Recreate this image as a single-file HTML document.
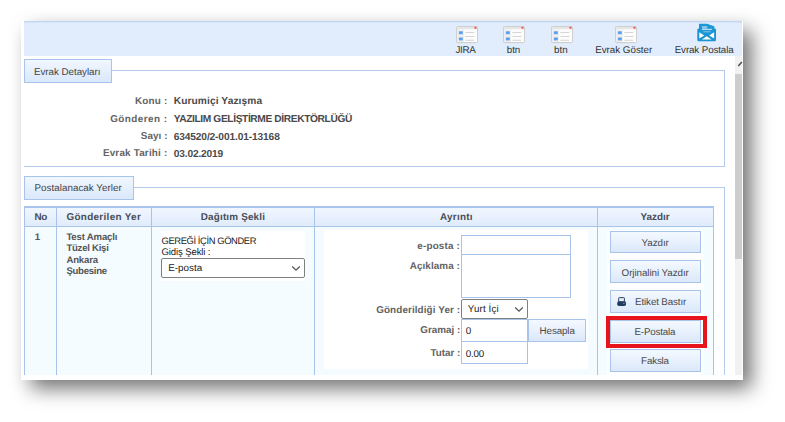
<!DOCTYPE html>
<html lang="tr"><head><meta charset="utf-8"><title>Evrak Postala</title>
<style>
html,body{margin:0;padding:0;background:#fff;}
body{width:785px;height:422px;position:relative;overflow:hidden;text-rendering:geometricPrecision;font-family:"Liberation Sans",sans-serif;}
.btn{position:absolute;box-sizing:border-box;border:1px solid #a9c4ea;background:linear-gradient(#f4f9ff,#dbe8fa);}
.inp{position:absolute;box-sizing:border-box;border:1px solid #a9c4ea;background:#fff;}
.sel{position:absolute;box-sizing:border-box;border:1px solid #808080;border-radius:2px;background:#fff;}
.leg{position:absolute;box-sizing:border-box;border:1px solid #a9c4ea;background:linear-gradient(#f2f7ff,#d9e8fb);}
</style></head><body>

<div style="position:absolute;left:21px;top:21px;width:722px;height:359px;box-sizing:border-box;background:#fff;box-shadow:8.5px 8.5px 19px rgba(0,0,0,0.56);"></div>
<div style="position:absolute;left:24px;top:21px;width:718px;height:35px;box-sizing:border-box;background:linear-gradient(#c3d7f3 0,#c3d7f3 1px,#d4e3f8 1px,#d4e3f8 2px,#e1edfd 2px);"></div>
<svg style="position:absolute;left:455.6px;top:25.5px" width="22" height="18" viewBox="0 0 22 18">
<rect x="0.6" y="1" width="20.8" height="16.2" rx="1" fill="#d9d9d9" opacity="0.7"/>
<rect x="0.5" y="0.5" width="21" height="16" rx="1" fill="#fcfcfc" stroke="#cfcfcf"/>
<rect x="1" y="1" width="20" height="2.2" fill="#e6e6e6"/>
<rect x="1" y="3.2" width="7" height="12.8" fill="#eeeeee"/>
<rect x="18.4" y="0.7" width="2.2" height="2" fill="#e8605c"/>
<rect x="2.9" y="5.3" width="3.9" height="2.9" fill="#5a9ff0"/>
<rect x="2.9" y="11.5" width="3.9" height="2.9" fill="#5a9ff0"/>
<rect x="9.4" y="6.2" width="8.8" height="0.8" fill="#cbcbcb"/>
<rect x="9.4" y="10" width="8.8" height="0.8" fill="#cbcbcb"/>
<rect x="9.4" y="13.8" width="8.8" height="0.8" fill="#cbcbcb"/>
</svg>
<svg style="position:absolute;left:503.2px;top:25.5px" width="22" height="18" viewBox="0 0 22 18">
<rect x="0.6" y="1" width="20.8" height="16.2" rx="1" fill="#d9d9d9" opacity="0.7"/>
<rect x="0.5" y="0.5" width="21" height="16" rx="1" fill="#fcfcfc" stroke="#cfcfcf"/>
<rect x="1" y="1" width="20" height="2.2" fill="#e6e6e6"/>
<rect x="1" y="3.2" width="7" height="12.8" fill="#eeeeee"/>
<rect x="18.4" y="0.7" width="2.2" height="2" fill="#e8605c"/>
<rect x="2.9" y="5.3" width="3.9" height="2.9" fill="#5a9ff0"/>
<rect x="2.9" y="11.5" width="3.9" height="2.9" fill="#5a9ff0"/>
<rect x="9.4" y="6.2" width="8.8" height="0.8" fill="#cbcbcb"/>
<rect x="9.4" y="10" width="8.8" height="0.8" fill="#cbcbcb"/>
<rect x="9.4" y="13.8" width="8.8" height="0.8" fill="#cbcbcb"/>
</svg>
<svg style="position:absolute;left:550.7px;top:25.5px" width="22" height="18" viewBox="0 0 22 18">
<rect x="0.6" y="1" width="20.8" height="16.2" rx="1" fill="#d9d9d9" opacity="0.7"/>
<rect x="0.5" y="0.5" width="21" height="16" rx="1" fill="#fcfcfc" stroke="#cfcfcf"/>
<rect x="1" y="1" width="20" height="2.2" fill="#e6e6e6"/>
<rect x="1" y="3.2" width="7" height="12.8" fill="#eeeeee"/>
<rect x="18.4" y="0.7" width="2.2" height="2" fill="#e8605c"/>
<rect x="2.9" y="5.3" width="3.9" height="2.9" fill="#5a9ff0"/>
<rect x="2.9" y="11.5" width="3.9" height="2.9" fill="#5a9ff0"/>
<rect x="9.4" y="6.2" width="8.8" height="0.8" fill="#cbcbcb"/>
<rect x="9.4" y="10" width="8.8" height="0.8" fill="#cbcbcb"/>
<rect x="9.4" y="13.8" width="8.8" height="0.8" fill="#cbcbcb"/>
</svg>
<svg style="position:absolute;left:614.8px;top:25.5px" width="22" height="18" viewBox="0 0 22 18">
<rect x="0.6" y="1" width="20.8" height="16.2" rx="1" fill="#d9d9d9" opacity="0.7"/>
<rect x="0.5" y="0.5" width="21" height="16" rx="1" fill="#fcfcfc" stroke="#cfcfcf"/>
<rect x="1" y="1" width="20" height="2.2" fill="#e6e6e6"/>
<rect x="1" y="3.2" width="7" height="12.8" fill="#eeeeee"/>
<rect x="18.4" y="0.7" width="2.2" height="2" fill="#e8605c"/>
<rect x="2.9" y="5.3" width="3.9" height="2.9" fill="#5a9ff0"/>
<rect x="2.9" y="11.5" width="3.9" height="2.9" fill="#5a9ff0"/>
<rect x="9.4" y="6.2" width="8.8" height="0.8" fill="#cbcbcb"/>
<rect x="9.4" y="10" width="8.8" height="0.8" fill="#cbcbcb"/>
<rect x="9.4" y="13.8" width="8.8" height="0.8" fill="#cbcbcb"/>
</svg>
<svg style="position:absolute;left:697px;top:23px" width="20" height="19" viewBox="0 0 20 19">
<path d="M2.6 1.3 H9.8 L16.8 3.8 V11 H2.6 Z" fill="#1d98d5" stroke="#1d98d5" stroke-width="1.2" stroke-linejoin="round"/>
<rect x="0.3" y="5.6" width="18.7" height="12.6" rx="1.3" fill="#1a93d2"/>
<path d="M2.6 1.3 H9.8 L16.8 3.8 V11 H2.6 Z" fill="#1d98d5"/>
<path d="M5 3.1 H10.2 V5.6 H5 Z" fill="#8cc9ec"/>
<rect x="5" y="5.8" width="9.8" height="1.1" fill="#c9e6f7"/>
<rect x="6.2" y="8.2" width="7.4" height="1" rx="0.5" fill="#7fc2ea"/>
<path d="M2.3 9.3 L7.2 12.5 L2.3 15.6 Z" fill="#fff"/>
<path d="M17.1 9.3 L12.2 12.5 L17.1 15.6 Z" fill="#fff"/>
<path d="M4.8 16.5 L9.7 13.3 L14.6 16.5 Z" fill="#fff"/>
</svg>
<div style="position:absolute;top:44px;height:14px;line-height:14px;font-size:9.8px;font-weight:normal;color:#333;white-space:nowrap;letter-spacing:-0.284px;left:455.40px;">JIRA</div>
<div style="position:absolute;top:44px;height:14px;line-height:14px;font-size:9.8px;font-weight:normal;color:#333;white-space:nowrap;left:506.69px;">btn</div>
<div style="position:absolute;top:44px;height:14px;line-height:14px;font-size:9.8px;font-weight:normal;color:#333;white-space:nowrap;left:553.99px;">btn</div>
<div style="position:absolute;top:44px;height:14px;line-height:14px;font-size:9.8px;font-weight:normal;color:#333;white-space:nowrap;letter-spacing:-0.015px;left:595.20px;">Evrak Göster</div>
<div style="position:absolute;top:44px;height:14px;line-height:14px;font-size:9.8px;font-weight:normal;color:#333;white-space:nowrap;letter-spacing:-0.120px;left:674.70px;">Evrak Postala</div>
<div style="position:absolute;left:735px;top:56px;width:7px;height:319px;box-sizing:border-box;background:#f1f1f1;"></div>
<div style="position:absolute;left:735px;top:74px;width:7px;height:184.5px;box-sizing:border-box;background:#cdcdcd;"></div>
<svg style="position:absolute;left:736px;top:59px" width="7" height="9" viewBox="0 0 7 9"><path d="M2.3 6.9 L5.9 2.9" stroke="#4d4d4d" stroke-width="1.5" fill="none"/></svg>
<div style="position:absolute;left:24px;top:69.6px;width:701px;height:97.2px;box-sizing:border-box;border:1px solid #b4cbee;border-left:none;"></div>
<div class="leg" style="left:24px;top:58.6px;width:87.8px;height:24.4px;"></div>
<div style="position:absolute;top:66px;height:14px;line-height:14px;font-size:9.8px;font-weight:normal;color:#444;white-space:nowrap;letter-spacing:-0.039px;left:34.00px;">Evrak Detayları</div>
<div style="position:absolute;top:95px;height:14px;line-height:14px;font-size:9.9px;font-weight:bold;color:#636363;white-space:nowrap;letter-spacing:0.210px;left:135.00px;">Konu :</div>
<div style="position:absolute;top:95px;height:14px;line-height:14px;font-size:10.2px;font-weight:bold;color:#4a4a4a;white-space:nowrap;letter-spacing:0.093px;left:173.70px;">Kurumiçi Yazışma</div>
<div style="position:absolute;top:113px;height:14px;line-height:14px;font-size:9.9px;font-weight:bold;color:#636363;white-space:nowrap;letter-spacing:0.460px;left:110.20px;">Gönderen :</div>
<div style="position:absolute;top:113px;height:14px;line-height:14px;font-size:10.2px;font-weight:bold;color:#4a4a4a;white-space:nowrap;letter-spacing:-0.372px;left:173.70px;">YAZILIM GELİŞTİRME DİREKTÖRLÜĞÜ</div>
<div style="position:absolute;top:130px;height:14px;line-height:14px;font-size:9.9px;font-weight:bold;color:#636363;white-space:nowrap;letter-spacing:0.064px;left:140.80px;">Sayı :</div>
<div style="position:absolute;top:131px;height:14px;line-height:14px;font-size:10.2px;font-weight:bold;color:#4a4a4a;white-space:nowrap;letter-spacing:-0.133px;left:173.70px;">634520/2-001.01-13168</div>
<div style="position:absolute;top:147px;height:14px;line-height:14px;font-size:9.9px;font-weight:bold;color:#636363;white-space:nowrap;letter-spacing:0.193px;left:102.90px;">Evrak Tarihi :</div>
<div style="position:absolute;top:148px;height:14px;line-height:14px;font-size:10.2px;font-weight:bold;color:#4a4a4a;white-space:nowrap;letter-spacing:-0.155px;left:173.70px;">03.02.2019</div>
<div style="position:absolute;left:24px;top:186.8px;width:701px;height:188.2px;box-sizing:border-box;border:1px solid #b4cbee;border-left:none;border-bottom:none;"></div>
<div class="leg" style="left:24px;top:175.5px;width:109.6px;height:24px;"></div>
<div style="position:absolute;top:182px;height:14px;line-height:14px;font-size:9.8px;font-weight:normal;color:#444;white-space:nowrap;letter-spacing:0.046px;left:34.40px;">Postalanacak Yerler</div>
<div style="position:absolute;left:24px;top:206.6px;width:689.5px;height:168.4px;box-sizing:border-box;background:#f4fcff;"></div>
<div style="position:absolute;left:24px;top:206.6px;width:689.5px;height:20.4px;box-sizing:border-box;background:linear-gradient(#f1f7ff,#dfebfb);"></div>
<div style="position:absolute;left:24px;top:206.4px;width:690px;height:1.3px;box-sizing:border-box;background:#a9c4ea;"></div>
<div style="position:absolute;left:24px;top:226.2px;width:690px;height:1.1px;box-sizing:border-box;background:#a9c4ea;"></div>
<div style="position:absolute;left:23.5px;top:206.4px;width:1.2px;height:168.6px;box-sizing:border-box;background:#a9c4ea;"></div>
<div style="position:absolute;left:56.3px;top:206.4px;width:1.2px;height:168.6px;box-sizing:border-box;background:#a9c4ea;"></div>
<div style="position:absolute;left:151px;top:206.4px;width:1.2px;height:168.6px;box-sizing:border-box;background:#a9c4ea;"></div>
<div style="position:absolute;left:313.7px;top:206.4px;width:1.2px;height:168.6px;box-sizing:border-box;background:#a9c4ea;"></div>
<div style="position:absolute;left:597.1px;top:206.4px;width:1.2px;height:168.6px;box-sizing:border-box;background:#a9c4ea;"></div>
<div style="position:absolute;left:712.9px;top:206.4px;width:1.2px;height:168.6px;box-sizing:border-box;background:#a9c4ea;"></div>
<div style="position:absolute;top:211px;height:14px;line-height:14px;font-size:9.9px;font-weight:bold;color:#474d58;white-space:nowrap;letter-spacing:-0.498px;left:34.60px;">No</div>
<div style="position:absolute;top:211px;height:14px;line-height:14px;font-size:9.9px;font-weight:bold;color:#474d58;white-space:nowrap;letter-spacing:0.333px;left:66.40px;">Gönderilen Yer</div>
<div style="position:absolute;top:211px;height:14px;line-height:14px;font-size:9.9px;font-weight:bold;color:#474d58;white-space:nowrap;letter-spacing:0.172px;left:200.80px;">Dağıtım Şekli</div>
<div style="position:absolute;top:211px;height:14px;line-height:14px;font-size:9.9px;font-weight:bold;color:#474d58;white-space:nowrap;letter-spacing:0.273px;left:440.00px;">Ayrıntı</div>
<div style="position:absolute;top:211px;height:14px;line-height:14px;font-size:9.9px;font-weight:bold;color:#474d58;white-space:nowrap;letter-spacing:0.039px;left:640.40px;">Yazdır</div>
<div style="position:absolute;top:231px;height:14px;line-height:14px;font-size:9.6px;font-weight:bold;color:#555;white-space:nowrap;left:34.80px;">1</div>
<div style="position:absolute;top:231px;height:14px;line-height:14px;font-size:9.6px;font-weight:bold;color:#555;white-space:nowrap;letter-spacing:-0.184px;left:66.40px;">Test Amaçlı</div>
<div style="position:absolute;top:242px;height:14px;line-height:14px;font-size:9.6px;font-weight:bold;color:#555;white-space:nowrap;letter-spacing:-0.261px;left:66.40px;">Tüzel Kişi</div>
<div style="position:absolute;top:254px;height:14px;line-height:14px;font-size:9.6px;font-weight:bold;color:#555;white-space:nowrap;letter-spacing:-0.175px;left:66.40px;">Ankara</div>
<div style="position:absolute;top:265px;height:14px;line-height:14px;font-size:9.6px;font-weight:bold;color:#555;white-space:nowrap;letter-spacing:-0.272px;left:66.40px;">Şubesine</div>
<div style="position:absolute;left:160.8px;top:231px;width:144.2px;height:50.4px;box-sizing:border-box;background:#fff;"></div>
<div style="position:absolute;top:234px;height:14px;line-height:14px;font-size:9.4px;font-weight:normal;color:#222;white-space:nowrap;letter-spacing:-0.391px;left:161.50px;">GEREĞİ İÇİN GÖNDER</div>
<div style="position:absolute;top:246px;height:14px;line-height:14px;font-size:9.6px;font-weight:normal;color:#222;white-space:nowrap;letter-spacing:-0.137px;left:161.50px;">Gidiş Şekli :</div>
<div class="sel" style="left:161px;top:257.6px;width:143.8px;height:20.4px;"></div>
<div style="position:absolute;top:262px;height:14px;line-height:14px;font-size:9.8px;font-weight:normal;color:#222;white-space:nowrap;letter-spacing:0.047px;left:168.20px;">E-posta</div>
<svg style="position:absolute;left:291.4px;top:264.5px" width="10" height="7" viewBox="0 0 10 7"><path d="M1.2 1.5 L5 5.2 L8.8 1.5" stroke="#555" stroke-width="1.25" fill="none"/></svg>
<div style="position:absolute;left:323.5px;top:230px;width:264.9px;height:139.2px;box-sizing:border-box;background:#fff;"></div>
<div style="position:absolute;top:240px;height:14px;line-height:14px;font-size:9.9px;font-weight:bold;color:#636363;white-space:nowrap;letter-spacing:0.172px;left:417.30px;">e-posta :</div>
<div style="position:absolute;top:260px;height:14px;line-height:14px;font-size:9.9px;font-weight:bold;color:#636363;white-space:nowrap;letter-spacing:0.088px;left:409.70px;">Açıklama :</div>
<div style="position:absolute;top:304px;height:14px;line-height:14px;font-size:9.9px;font-weight:bold;color:#636363;white-space:nowrap;letter-spacing:0.104px;left:376.20px;">Gönderildiği Yer :</div>
<div style="position:absolute;top:324px;height:14px;line-height:14px;font-size:9.9px;font-weight:bold;color:#636363;white-space:nowrap;letter-spacing:-0.021px;left:420.30px;">Gramaj :</div>
<div style="position:absolute;top:347px;height:14px;line-height:14px;font-size:9.9px;font-weight:bold;color:#636363;white-space:nowrap;letter-spacing:-0.038px;left:430.50px;">Tutar :</div>
<div class="inp" style="left:461px;top:234.9px;width:109.6px;height:20px;"></div>
<div class="inp" style="left:461px;top:254px;width:109.6px;height:43.8px;"></div>
<div class="sel" style="left:461px;top:298.8px;width:66.6px;height:20px;"></div>
<div style="position:absolute;top:303px;height:14px;line-height:14px;font-size:9.8px;font-weight:normal;color:#222;white-space:nowrap;letter-spacing:0.131px;left:467.80px;">Yurt İçi</div>
<svg style="position:absolute;left:514.4px;top:306px" width="10" height="7" viewBox="0 0 10 7"><path d="M1.2 1.5 L5 5.2 L8.8 1.5" stroke="#555" stroke-width="1.25" fill="none"/></svg>
<div class="inp" style="left:461px;top:318.8px;width:66.6px;height:23px;"></div>
<div class="inp" style="left:461px;top:341px;width:66.6px;height:23.4px;"></div>
<div style="position:absolute;top:325px;height:14px;line-height:14px;font-size:9.8px;font-weight:normal;color:#222;white-space:nowrap;left:465.80px;">0</div>
<div style="position:absolute;top:348px;height:14px;line-height:14px;font-size:9.8px;font-weight:normal;color:#222;white-space:nowrap;letter-spacing:-0.193px;left:465.80px;">0.00</div>
<div class="btn" style="left:528.4px;top:319.4px;width:57.8px;height:22.2px;"><span style="position:absolute;top:4.6px;height:14px;line-height:14px;font-size:9.8px;font-weight:normal;color:#4a4a4a;white-space:nowrap;letter-spacing:-0.108px;left:10.20px;">Hesapla</span></div>
<div style="position:absolute;left:606.6px;top:229.5px;width:97.2px;height:145.5px;box-sizing:border-box;background:#fdfeff;"></div>
<div class="btn" style="left:609.9px;top:231.3px;width:91.4px;height:22.1px;"><span style="position:absolute;top:4.7px;height:14px;line-height:14px;font-size:9.8px;font-weight:normal;color:#4a4a4a;white-space:nowrap;letter-spacing:-0.049px;left:30.60px;">Yazdır</span></div>
<div class="btn" style="left:609.9px;top:260.3px;width:91.4px;height:23.2px;"><span style="position:absolute;top:5.7px;height:14px;line-height:14px;font-size:9.8px;font-weight:normal;color:#4a4a4a;white-space:nowrap;letter-spacing:-0.063px;left:10.70px;">Orjinalini Yazdır</span></div>
<div class="btn" style="left:609.9px;top:290px;width:91.4px;height:23.2px;"><span style="position:absolute;top:5px;height:14px;line-height:14px;font-size:9.8px;font-weight:normal;color:#4a4a4a;white-space:nowrap;letter-spacing:-0.133px;left:24.20px;">Etiket Bastır</span></div>
<div class="btn" style="left:609.9px;top:320.3px;width:91.4px;height:22.4px;"><span style="position:absolute;top:4.7px;height:14px;line-height:14px;font-size:9.8px;font-weight:normal;color:#4a4a4a;white-space:nowrap;letter-spacing:-0.188px;left:23.60px;">E-Postala</span></div>
<div class="btn" style="left:609.9px;top:349.3px;width:91.4px;height:22.5px;"><span style="position:absolute;top:4.7px;height:14px;line-height:14px;font-size:9.8px;font-weight:normal;color:#4a4a4a;white-space:nowrap;letter-spacing:-0.177px;left:30.20px;">Faksla</span></div>
<svg style="position:absolute;left:616.6px;top:296.8px" width="10" height="10" viewBox="0 0 10 10">
<rect x="1.6" y="0.5" width="5.9" height="4.8" rx="0.9" fill="#c3cedb" stroke="#2b4564" stroke-width="0.9"/>
<rect x="2.8" y="1.7" width="3.5" height="2.3" fill="#e9eff6"/>
<rect x="0.2" y="4.3" width="8.8" height="4.7" rx="1.7" fill="#203c5f"/>
<circle cx="6.9" cy="6.4" r="0.55" fill="#a9bbd0"/>
</svg>
<div style="position:absolute;left:606px;top:316px;width:101px;height:32px;box-sizing:border-box;border:4px solid #e8141c;"></div>
<div style="position:absolute;left:21px;top:375px;width:722px;height:5px;box-sizing:border-box;background:#fff;"></div>
</body></html>
